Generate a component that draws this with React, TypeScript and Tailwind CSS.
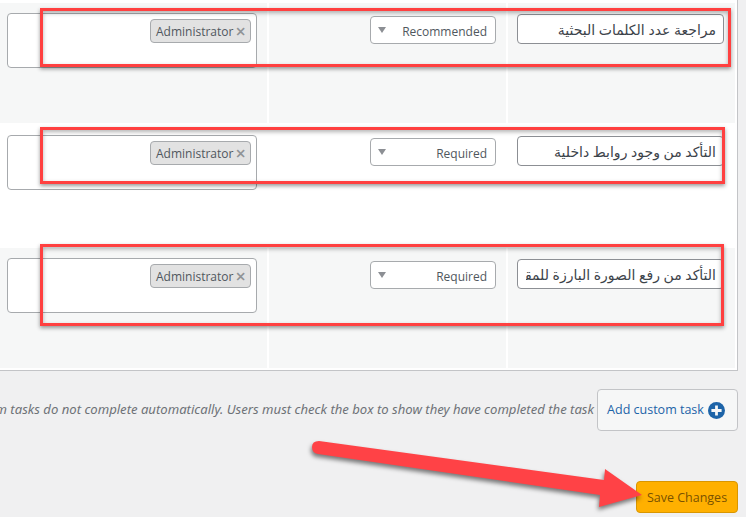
const uiFont = "font-['Open_Sans','DejaVu_Sans',sans-serif]";

const frameShadow = "shadow-[0_2px_4px_rgba(0,0,0,0.4),inset_0_2px_4px_rgba(0,0,0,0.3)]";

type TaskRow = {
  title: string;
  level: string;
  rowClass: string;
};

const rows: TaskRow[] = [
  { title: "مراجعة عدد الكلمات البحثية", level: "Recommended", rowClass: "h-[120px] pt-[10px] bg-[#f6f7f7]" },
  { title: "التأكد من وجود روابط داخلية", level: "Required", rowClass: "h-[125px] pt-[12px] bg-white" },
  { title: "التأكد من رفع الصورة البارزة للمقال", level: "Required", rowClass: "h-[120px] pt-[10px] bg-[#f6f7f7]" },
];

function RoleTag() {
  return (
    <div className="flex h-[24px] w-[101px] items-center rounded-[4px] border border-[#a7aaad] bg-[#e2e2e2] pt-[2px] pl-[5px] text-[12px] text-[#50575e]">
      <span>Administrator</span>
      <span className="mb-[2px] ml-[2px] text-[18px] leading-none font-semibold text-[#909396]">×</span>
    </div>
  );
}

function Row({ row }: { row: TaskRow }) {
  return (
    <div className="grid grid-cols-[267px_237px_227px] gap-x-[2px] bg-white">
      <div className={row.rowClass + " pl-[7px]"}>
        <div className="flex h-[55px] w-[250px] justify-end rounded-[4px] border border-[#a7aaad] bg-white pt-[5px] pr-[5px]">
          <RoleTag />
        </div>
      </div>
      <div className={row.rowClass + " pl-[101px]"}>
        <div className="mt-[3px] flex h-[28px] w-[126px] items-center justify-between rounded-[4px] border border-[#a7aaad] bg-white pr-[8px] pl-[6px] text-[12px] text-[#50575e]">
          <svg width="10" height="6" viewBox="0 0 10 6">
            <path d="M1 0h8L5 6z" fill="#8c8f94" />
          </svg>
          <span className="pt-[3px]">{row.level}</span>
        </div>
      </div>
      <div className={row.rowClass + " pl-[9px]"}>
        <input
          readOnly
          dir="rtl"
          value={row.title}
          className="mt-[1px] h-[30px] w-[207px] rounded-[4px] border border-[#8c8f94] bg-white pr-[7px] pl-[8px] text-[14px] text-[#3c434a] outline-none"
        />
      </div>
    </div>
  );
}

export default function App() {
  return (
    <div className={"relative h-[517px] w-[746px] overflow-hidden bg-[#f0f0f1] " + uiFont}>
      <div className="w-[738px] border-r border-b border-[#c3c4c7] bg-white pt-[3px] pr-[2px] pb-[2px]">
        {rows.map((row) => (
          <Row key={row.title} row={row} />
        ))}
      </div>

      <div className="mt-[18px] flex w-[738px] items-center justify-end gap-[3px]">
        <p className="shrink-0 font-['Noto_Sans',sans-serif] text-[13.1px] whitespace-nowrap text-[#6e7277] italic">
          Custom tasks do not complete automatically. Users must check the box to show they have completed the task
        </p>
        <button className="flex h-[42px] w-[141px] shrink-0 items-center justify-center gap-[4px] rounded-[4px] border border-[#c3c4c7] bg-[#f6f7f7] pr-[3px] text-[12.5px] text-[#1d64a8]">
          <span className="pt-[1px]">Add custom task</span>
          <svg width="17" height="17" viewBox="0 0 16 16">
            <circle cx="8" cy="8" r="8" fill="#1d64a8" />
            <path d="M6.7 3.2h2.6v3.5h3.5v2.6H9.3v3.5H6.7V9.3H3.2V6.7h3.5z" fill="#f6f7f7" />
          </svg>
        </button>
      </div>

      <div className="mt-[50px] flex w-[738px] justify-end">
        <button className="h-[32px] w-[102px] rounded-[4px] border border-[#d99600] bg-[#ffb000] pt-[2px] text-[12.5px] text-[#7a5200]">
          Save Changes
        </button>
      </div>

      {/* annotations drawn on top of the screenshot */}
      <div className={"absolute top-[8px] left-[40px] h-[59px] w-[691px] border-[3px] border-[#ff4040] " + frameShadow} />
      <div className={"absolute top-[127px] left-[40px] h-[57px] w-[685px] border-[3px] border-[#ff4040] " + frameShadow} />
      <div className={"absolute top-[244px] left-[40px] h-[82px] w-[684px] border-[3px] border-[#ff4040] " + frameShadow} />

      <svg
        className="absolute top-[440px] left-[305px] drop-shadow-[-1px_3px_2px_rgba(0,0,0,0.5)]"
        width="345"
        height="75"
        viewBox="0 0 345 75"
      >
        <path
          d="M14 1 Q7 1 7 7 Q7 13 13 14 L295 55 L294 67 L337 55 L300 29 L299 40 Z"
          fill="#ff4246"
        />
      </svg>
    </div>
  );
}
